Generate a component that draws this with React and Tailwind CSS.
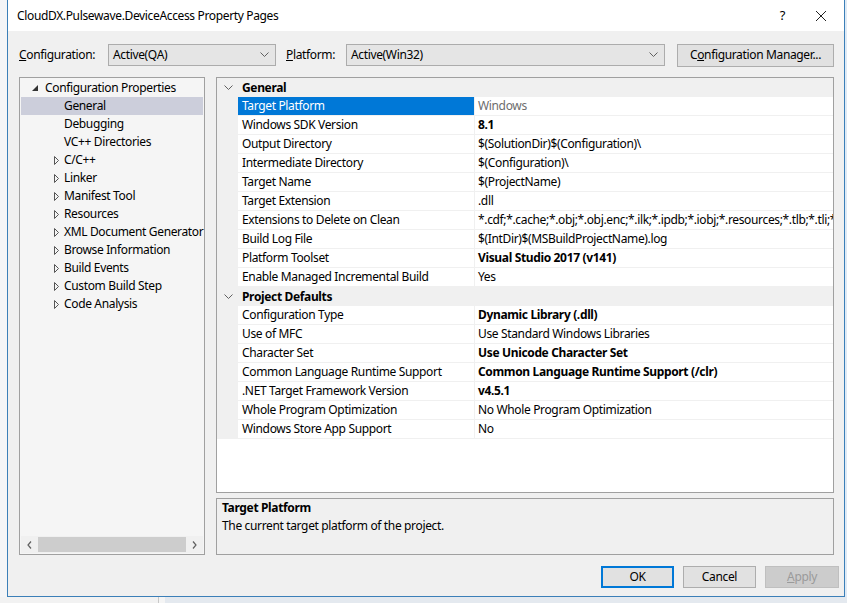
import React from "react";

const treeItems = [
  { label: "General", selected: true },
  { label: "Debugging" },
  { label: "VC++ Directories" },
  { label: "C/C++", expand: true },
  { label: "Linker", expand: true },
  { label: "Manifest Tool", expand: true },
  { label: "Resources", expand: true },
  { label: "XML Document Generator", expand: true },
  { label: "Browse Information", expand: true },
  { label: "Build Events", expand: true },
  { label: "Custom Build Step", expand: true },
  { label: "Code Analysis", expand: true },
];

const general = [
  { name: "Target Platform", value: "Windows", selected: true },
  { name: "Windows SDK Version", value: "8.1", bold: true },
  { name: "Output Directory", value: "$(SolutionDir)$(Configuration)\\" },
  { name: "Intermediate Directory", value: "$(Configuration)\\" },
  { name: "Target Name", value: "$(ProjectName)" },
  { name: "Target Extension", value: ".dll" },
  {
    name: "Extensions to Delete on Clean",
    value: "*.cdf;*.cache;*.obj;*.obj.enc;*.ilk;*.ipdb;*.iobj;*.resources;*.tlb;*.tli;*.t",
  },
  { name: "Build Log File", value: "$(IntDir)$(MSBuildProjectName).log" },
  { name: "Platform Toolset", value: "Visual Studio 2017 (v141)", bold: true },
  { name: "Enable Managed Incremental Build", value: "Yes" },
];

const defaults = [
  { name: "Configuration Type", value: "Dynamic Library (.dll)", bold: true },
  { name: "Use of MFC", value: "Use Standard Windows Libraries" },
  { name: "Character Set", value: "Use Unicode Character Set", bold: true },
  { name: "Common Language Runtime Support", value: "Common Language Runtime Support (/clr)", bold: true },
  { name: ".NET Target Framework Version", value: "v4.5.1", bold: true },
  { name: "Whole Program Optimization", value: "No Whole Program Optimization" },
  { name: "Windows Store App Support", value: "No" },
];

function Chevron({ className = "" }) {
  return (
    <svg width="9" height="6" viewBox="0 0 9 6" className={className}>
      <path d="M0.5 0.5 L4.5 4.5 L8.5 0.5" fill="none" stroke="#606060" strokeWidth="1" />
    </svg>
  );
}

function Combo({ width, value }) {
  return (
    <div
      className="h-[22px] border border-[#acacac] bg-[#e5e5e5] flex items-center justify-between pl-[4px] pr-[6px]"
      style={{ width }}
    >
      <span>{value}</span>
      <Chevron />
    </div>
  );
}

function CategoryRow({ label }) {
  return (
    <div className="h-[19px] flex items-center bg-[#f0f0f0] shrink-0">
      <div className="w-[21px] flex justify-center pl-[2px]">
        <Chevron />
      </div>
      <span className="pl-[4px] font-bold">{label}</span>
    </div>
  );
}

function PropRow({ row }) {
  return (
    <div className="h-[19px] flex shrink-0">
      <div className="w-[21px] bg-[#f0f0f0]" />
      <div
        className={
          "w-[236px] flex items-center pl-[4px] border-b border-[#f0f0f0] " +
          (row.selected ? "bg-[#0078d7] text-white border-[#0078d7]" : "")
        }
      >
        {row.name}
      </div>
      <div className="w-px bg-[#f0f0f0]" />
      <div
        className={
          "flex-1 min-w-0 flex items-center pl-[3px] border-b border-[#f0f0f0] whitespace-nowrap overflow-hidden " +
          (row.bold ? "font-bold " : "") +
          (row.selected ? "text-[#6d6d6d]" : "")
        }
      >
        {row.value}
      </div>
    </div>
  );
}

export default function App() {
  return (
    <div className="w-[847px] h-[603px] overflow-hidden bg-[#f4f5f7] flex flex-col text-[12px] tracking-[-0.35px] text-black font-['Noto_Sans',sans-serif] leading-none">
      <div className="flex">
        {/* Dialog */}
        <div className="ml-[7px] w-[838px] h-[597px] border border-[#3b7fb8] border-t-0 flex flex-col bg-[#f0f0f0]">
          {/* Title bar */}
          <div className="h-[31px] bg-white flex items-center justify-between pl-[9px] pr-[17px]">
            <span className="pt-[1px]">CloudDX.Pulsewave.DeviceAccess Property Pages</span>
            <div className="flex items-center gap-[30px]">
              <span className="text-[13px]">?</span>
              <svg width="12" height="12" viewBox="0 0 12 12">
                <path d="M1 1 L11 11 M11 1 L1 11" stroke="#222" strokeWidth="1" />
              </svg>
            </div>
          </div>

          {/* Body */}
          <div className="flex-1 flex flex-col pl-[11px] pr-[9px] pt-[13px]">
            {/* Config row */}
            <div className="flex items-center h-[22px]">
              <span className="w-[89px]">
                <span className="underline">C</span>onfiguration:
              </span>
              <Combo width="168px" value="Active(QA)" />
              <span className="ml-[10px] w-[60px]">
                <span className="underline">P</span>latform:
              </span>
              <Combo width="319px" value="Active(Win32)" />
              <div className="ml-[12px] w-[157px] h-[23px] border border-[#adadad] bg-[#e1e1e1] flex items-center justify-center">
                C<span className="underline">o</span>nfiguration Manager...
              </div>
            </div>

            {/* Panels */}
            <div className="flex mt-[11px] h-[478px]">
              {/* Tree */}
              <div className="w-[186px] border border-[#a0a0a0] bg-[#f5f5f5] flex flex-col">
                <div className="flex-1 pt-[1px]">
                  <div className="h-[18px] flex items-center">
                    <svg width="6" height="6" viewBox="0 0 6 6" className="ml-[12px]">
                      <path d="M0 6 L6 6 L6 0 Z" fill="#333" />
                    </svg>
                    <span className="ml-[7px]">Configuration Properties</span>
                  </div>
                  {treeItems.map((it) => (
                    <div
                      key={it.label}
                      className={"h-[18px] flex items-center mx-[1px] " + (it.selected ? "bg-[#cccedb]" : "")}
                    >
                      <div className="w-[43px] shrink-0 flex justify-end pr-[5px]">
                        {it.expand && (
                          <svg width="5" height="9" viewBox="0 0 5 9">
                            <path d="M0.5 0.5 L4.5 4.5 L0.5 8.5 Z" fill="none" stroke="#555" strokeWidth="1" />
                          </svg>
                        )}
                      </div>
                      <span className="whitespace-nowrap">{it.label}</span>
                    </div>
                  ))}
                </div>
                {/* Horizontal scrollbar */}
                <div className="h-[17px] mx-[1px] mb-[1px] bg-[#f0f0f0] flex items-center">
                  <div className="w-[17px] flex justify-center">
                    <svg width="5" height="8" viewBox="0 0 5 8">
                      <path d="M4 0.5 L1 4 L4 7.5" fill="none" stroke="#606060" strokeWidth="1.2" />
                    </svg>
                  </div>
                  <div className="flex-1 h-[15px] bg-[#cdcdcd]" />
                  <div className="w-[17px] flex justify-center">
                    <svg width="5" height="8" viewBox="0 0 5 8">
                      <path d="M1 0.5 L4 4 L1 7.5" fill="none" stroke="#606060" strokeWidth="1.2" />
                    </svg>
                  </div>
                </div>
              </div>

              {/* Right column */}
              <div className="ml-[11px] w-[618px] flex flex-col">
                <div className="h-[416px] border border-[#a0a0a0] bg-white flex flex-col overflow-hidden">
                  <CategoryRow label="General" />
                  {general.map((r) => (
                    <PropRow key={r.name} row={r} />
                  ))}
                  <CategoryRow label="Project Defaults" />
                  {defaults.map((r) => (
                    <PropRow key={r.name} row={r} />
                  ))}
                </div>
                <div className="mt-[5px] flex-1 border border-[#a0a0a0] bg-[#f0f0f0] px-[5px]">
                  <div className="font-bold h-[18px] flex items-center">Target Platform</div>
                  <div className="h-[18px] flex items-center">The current target platform of the project.</div>
                </div>
              </div>
            </div>

            {/* Buttons */}
            <div className="flex justify-end mt-[11px] gap-[9px] mr-[-4px]">
              <div className="w-[73px] h-[22px] border-2 border-[#0078d7] bg-[#e1e1e1] flex items-center justify-center">
                OK
              </div>
              <div className="w-[73px] h-[22px] border border-[#adadad] bg-[#e1e1e1] flex items-center justify-center">
                Cancel
              </div>
              <div className="w-[74px] h-[22px] border border-[#bfbfbf] bg-[#cccccc] text-[#9a9a9a] flex items-center justify-center">
                <span className="underline">A</span>pply
              </div>
            </div>
          </div>
        </div>
        <div className="flex-1 h-[597px] bg-[#dfeaf5]" />
      </div>
      {/* Background below the dialog */}
      <div className="flex-1 flex">
        <div className="w-[158px] bg-[#f2f2f2]" />
        <div className="w-[7px] border-l border-[#c8c8c8] bg-[#f5f5f5]" />
        <div className="flex-1 bg-[#e4e9ef]" />
      </div>
    </div>
  );
}
